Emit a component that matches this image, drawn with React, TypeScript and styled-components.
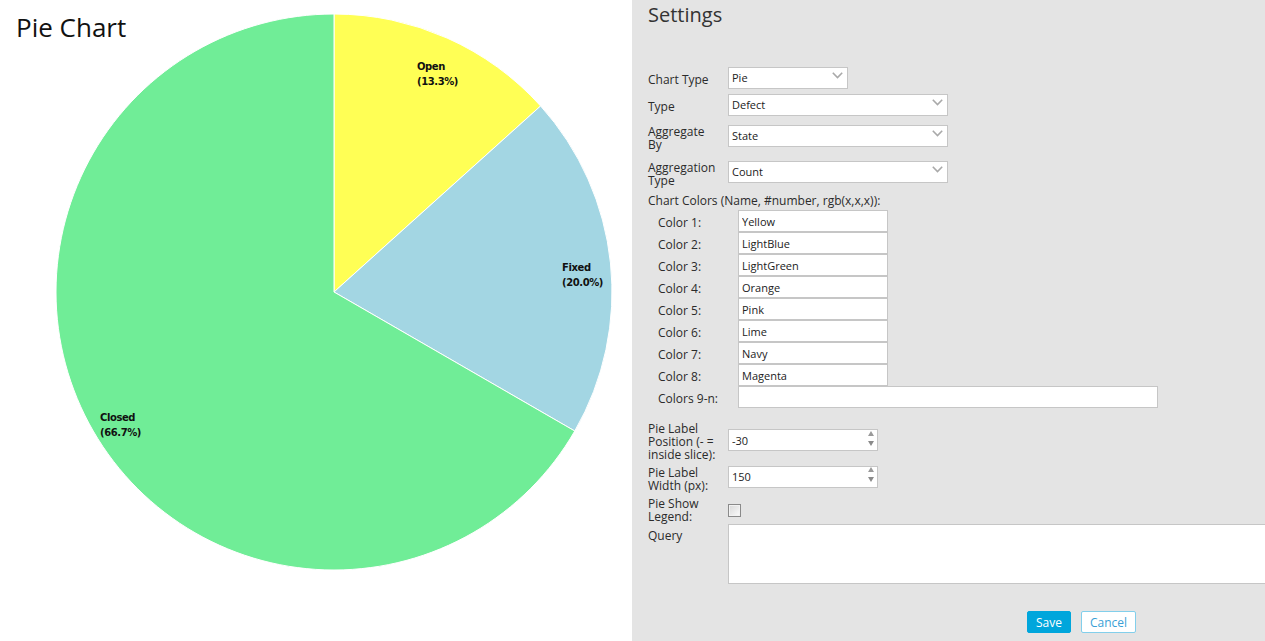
import React from "react";
import styled, { createGlobalStyle } from "styled-components";

const GlobalStyle = createGlobalStyle`
  html, body {
    margin: 0;
    padding: 0;
  }
  body {
    font-family: "Open Sans", "Liberation Sans", sans-serif;
    background: #fff;
  }
`;

const Page = styled.div`
  display: flex;
  height: 100vh;
  overflow: hidden;
`;

const ChartPane = styled.div`
  position: relative;
  flex: 0 0 632px;
  background: #fff;
`;

const ChartTitle = styled.h1`
  position: absolute;
  left: 16px;
  top: 9px;
  margin: 0;
  font: 400 26px/normal "Open Sans", sans-serif;
  color: #111;
`;

const PieSvg = styled.svg`
  display: block;
`;

const SliceLabel = styled.text`
  font: bold 10px "DejaVu Sans", Verdana, sans-serif;
  letter-spacing: -0.4px;
  fill: #111;
`;

const SettingsPane = styled.div`
  flex: 1;
  background: #e4e4e4;
  padding: 1px 0 0 16px;
  overflow: hidden;
  color: #2b2b2b;
`;

const PanelTitle = styled.h2`
  margin: 0;
  font: 400 20px/27px "Open Sans", sans-serif;
  color: #333;
`;

const Row = styled.div<{ $mt: number; $align?: string }>`
  display: flex;
  align-items: ${(p) => p.$align ?? "center"};
  margin-top: ${(p) => p.$mt}px;
`;

const Label = styled.label<{ $pt?: number }>`
  flex: 0 0 80px;
  box-sizing: border-box;
  padding: ${(p) => p.$pt ?? 2}px 12px 0 0;
  font-size: 12px;
  line-height: 13px;
`;

const Heading = styled.div<{ $mt: number }>`
  margin-top: ${(p) => p.$mt}px;
  font-size: 12px;
  line-height: 13px;
`;

const ColorList = styled.div`
  padding-left: 10px;
  margin-top: 3px;
`;

const TextInput = styled.input<{ $w: number }>`
  box-sizing: border-box;
  width: ${(p) => p.$w}px;
  height: 22px;
  border: 1px solid #c6c6c6;
  background: #fff;
  padding: 0 3px;
  font: 11px "Open Sans", sans-serif;
  color: #222;
  outline: none;
  border-radius: 0;
`;

const SelectWrap = styled.div<{ $w: number }>`
  position: relative;
  width: ${(p) => p.$w}px;
  height: 22px;
`;

const NativeSelect = styled.select`
  appearance: none;
  box-sizing: border-box;
  width: 100%;
  height: 100%;
  border: 1px solid #c6c6c6;
  border-radius: 0;
  background: #fff;
  padding: 0 20px 0 3px;
  font: 11px "Open Sans", sans-serif;
  color: #222;
  outline: none;
`;

const Chevron = styled.svg`
  position: absolute;
  right: 5px;
  top: 7px;
  pointer-events: none;
`;

const NumberWrap = styled.div<{ $lift: number }>`
  position: relative;
  width: 150px;
  height: 22px;
  margin-bottom: ${(p) => p.$lift * 2}px;
`;

const NumberInput = styled(TextInput)`
  -moz-appearance: textfield;
  &::-webkit-inner-spin-button,
  &::-webkit-outer-spin-button {
    -webkit-appearance: none;
    margin: 0;
  }
`;

const Spinner = styled.svg`
  position: absolute;
  right: 4px;
  top: 3px;
  pointer-events: none;
`;

const CheckBox = styled.input`
  appearance: none;
  box-sizing: border-box;
  width: 13px;
  height: 13px;
  margin: 2px 0 0 0;
  border: 1px solid #8a8a8a;
  box-shadow: inset 0 0 0 1px #f2f2f2;
  background: linear-gradient(135deg, #d8d8d8, #fbfbfb);
`;

const QueryArea = styled.textarea`
  box-sizing: border-box;
  flex: 0 0 560px;
  height: 60px;
  border: 1px solid #c6c6c6;
  background: #fff;
  resize: none;
  outline: none;
`;

const ButtonRow = styled.div`
  display: flex;
  gap: 10px;
  margin: 27px 0 0 379px;
`;

const Button = styled.button<{ $primary?: boolean }>`
  box-sizing: border-box;
  height: 22px;
  padding: 0 8px;
  font: 12px "Open Sans", sans-serif;
  border-radius: 2px;
  border: 1px solid ${(p) => (p.$primary ? "#00a6dc" : "#82cfeb")};
  background: ${(p) => (p.$primary ? "#00a6dc" : "#fff")};
  color: ${(p) => (p.$primary ? "#fff" : "#3a9fd6")};
  cursor: pointer;
`;

const CX = 334;
const CY = 292;
const R = 278;

const slices = [
  { name: "Open", pct: 13.3, share: 2 / 15, color: "#ffff55", lx: 417, ly: 70 },
  { name: "Fixed", pct: 20.0, share: 3 / 15, color: "#a3d6e3", lx: 562, ly: 271 },
  { name: "Closed", pct: 66.7, share: 10 / 15, color: "#70ed97", lx: 100, ly: 421 },
];

const point = (a: number) => [CX + R * Math.sin(a), CY - R * Math.cos(a)];

const PieChart = () => {
  let start = 0;
  return (
    <PieSvg width={632} height={641}>
      {slices.map((s) => {
        const end = start + s.share * Math.PI * 2;
        const [x1, y1] = point(start);
        const [x2, y2] = point(end);
        const large = end - start > Math.PI ? 1 : 0;
        start = end;
        return (
          <path
            key={s.name}
            d={`M${CX},${CY} L${x1},${y1} A${R},${R} 0 ${large} 1 ${x2},${y2} Z`}
            fill={s.color}
            stroke="#fff"
            strokeWidth={1}
          />
        );
      })}
      {slices.map((s) => (
        <SliceLabel key={s.name} x={s.lx} y={s.ly}>
          <tspan x={s.lx}>{s.name}</tspan>
          <tspan x={s.lx} dy={15}>
            ({s.pct.toFixed(1)}%)
          </tspan>
        </SliceLabel>
      ))}
    </PieSvg>
  );
};

const Select = ({ w, value }: { w: number; value: string }) => (
  <SelectWrap $w={w}>
    <NativeSelect defaultValue={value}>
      <option>{value}</option>
    </NativeSelect>
    <Chevron width={11} height={7} viewBox="0 0 11 7">
      <polyline points="0.8,0.8 5.5,5.5 10.2,0.8" fill="none" stroke="#a9a9a9" strokeWidth={1.6} />
    </Chevron>
  </SelectWrap>
);

const NumberField = ({ value, lift }: { value: string; lift: number }) => (
  <NumberWrap $lift={lift}>
    <NumberInput $w={150} type="number" defaultValue={value} />
    <Spinner width={6} height={15} viewBox="0 0 6 15">
      <polygon points="3,0 6,5 0,5" fill="#9a9a9a" />
      <polygon points="0,10 6,10 3,15" fill="#8a8a8a" />
    </Spinner>
  </NumberWrap>
);

const colors = ["Yellow", "LightBlue", "LightGreen", "Orange", "Pink", "Lime", "Navy", "Magenta"];

export default function App() {
  return (
    <>
      <GlobalStyle />
      <Page>
        <ChartPane>
          <PieChart />
          <ChartTitle>Pie Chart</ChartTitle>
        </ChartPane>
        <SettingsPane>
          <PanelTitle>Settings</PanelTitle>
          <Row $mt={37}>
            <Label $pt={7}>Chart Type</Label>
            <Select w={120} value="Pie" />
          </Row>
          <Row $mt={5}>
            <Label $pt={7}>Type</Label>
            <Select w={220} value="Defect" />
          </Row>
          <Row $mt={3}>
            <Label $pt={8}>Aggregate By</Label>
            <Select w={220} value="State" />
          </Row>
          <Row $mt={2}>
            <Label $pt={8}>Aggregation Type</Label>
            <Select w={220} value="Count" />
          </Row>
          <Heading $mt={7}>Chart Colors (Name, #number, rgb(x,x,x)):</Heading>
          <ColorList>
            {colors.map((c, i) => (
              <Row key={c} $mt={0}>
                <Label>Color {i + 1}:</Label>
                <TextInput $w={150} defaultValue={c} />
              </Row>
            ))}
            <Row $mt={0}>
              <Label>Colors 9-n:</Label>
              <TextInput $w={420} defaultValue="" />
            </Row>
          </ColorList>
          <Row $mt={12}>
            <Label>Pie Label Position (- = inside slice):</Label>
            <NumberField value="-30" lift={2} />
          </Row>
          <Row $mt={3}>
            <Label>Pie Label Width (px):</Label>
            <NumberField value="150" lift={3} />
          </Row>
          <Row $mt={3}>
            <Label>Pie Show Legend:</Label>
            <CheckBox type="checkbox" />
          </Row>
          <Row $mt={1} $align="flex-start">
            <Label $pt={5}>Query</Label>
            <QueryArea />
          </Row>
          <ButtonRow>
            <Button $primary>Save</Button>
            <Button>Cancel</Button>
          </ButtonRow>
        </SettingsPane>
      </Page>
    </>
  );
}
